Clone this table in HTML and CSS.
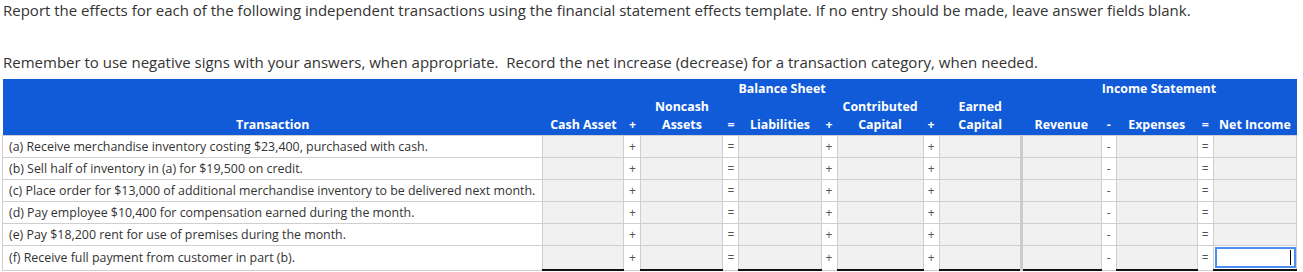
FILE: index.html
```html
<!DOCTYPE html>
<html lang="en">
<head>
<meta charset="utf-8">
<title>Financial statement effects template</title>
<link rel="stylesheet" href="styles.css">
</head>
<body>
<p class="intro">Report the effects for each of the following independent transactions using the financial statement effects template. If no entry should be made, leave answer fields blank.</p>
<p class="intro second">Remember to use negative signs with your answers, when appropriate.&nbsp; Record the net increase (decrease) for a transaction category, when needed.</p>
<table class="fse">
  <colgroup>
    <col class="c-txn">
    <col class="c-in81">
    <col class="c-op17">
    <col class="c-in82">
    <col class="c-op16">
    <col class="c-in82">
    <col class="c-op16">
    <col class="c-in86">
    <col class="c-op16">
    <col class="c-in82">
    <col class="c-in80">
    <col class="c-op15">
    <col class="c-in81">
    <col class="c-op16">
    <col class="c-in83">
  </colgroup>
  <thead>
    <tr class="group">
      <th rowspan="2" class="txn-h">Transaction</th>
      <th colspan="9">Balance Sheet</th>
      <th colspan="5">Income Statement</th>
    </tr>
    <tr class="labels">
      <th>Cash Asset</th><th class="op">+</th>
      <th>Noncash<br>Assets</th><th class="op">=</th>
      <th>Liabilities</th><th class="op">+</th>
      <th>Contributed<br>Capital</th><th class="op">+</th>
      <th>Earned<br>Capital</th>
      <th>Revenue</th><th class="op">-</th>
      <th>Expenses</th><th class="op">=</th>
      <th>Net Income</th>
    </tr>
  </thead>
  <tbody>
    <tr>
      <td class="txn">(a) Receive merchandise inventory costing $23,400, purchased with cash.</td>
      <td class="in"></td><td class="op">+</td><td class="in"></td><td class="op">=</td><td class="in"></td><td class="op">+</td><td class="in"></td><td class="op">+</td><td class="in sep"></td>
      <td class="in"></td><td class="op">-</td><td class="in"></td><td class="op">=</td><td class="in"></td>
    </tr>
    <tr>
      <td class="txn">(b) Sell half of inventory in (a) for $19,500 on credit.</td>
      <td class="in"></td><td class="op">+</td><td class="in"></td><td class="op">=</td><td class="in"></td><td class="op">+</td><td class="in"></td><td class="op">+</td><td class="in sep"></td>
      <td class="in"></td><td class="op">-</td><td class="in"></td><td class="op">=</td><td class="in"></td>
    </tr>
    <tr>
      <td class="txn">(c) Place order for $13,000 of additional merchandise inventory to be delivered next month.</td>
      <td class="in"></td><td class="op">+</td><td class="in"></td><td class="op">=</td><td class="in"></td><td class="op">+</td><td class="in"></td><td class="op">+</td><td class="in sep"></td>
      <td class="in"></td><td class="op">-</td><td class="in"></td><td class="op">=</td><td class="in"></td>
    </tr>
    <tr>
      <td class="txn">(d) Pay employee $10,400 for compensation earned during the month.</td>
      <td class="in"></td><td class="op">+</td><td class="in"></td><td class="op">=</td><td class="in"></td><td class="op">+</td><td class="in"></td><td class="op">+</td><td class="in sep"></td>
      <td class="in"></td><td class="op">-</td><td class="in"></td><td class="op">=</td><td class="in"></td>
    </tr>
    <tr>
      <td class="txn">(e) Pay $18,200 rent for use of premises during the month.</td>
      <td class="in"></td><td class="op">+</td><td class="in"></td><td class="op">=</td><td class="in"></td><td class="op">+</td><td class="in"></td><td class="op">+</td><td class="in sep"></td>
      <td class="in"></td><td class="op">-</td><td class="in"></td><td class="op">=</td><td class="in"></td>
    </tr>
    <tr class="last">
      <td class="txn">(f) Receive full payment from customer in part (b).</td>
      <td class="in"></td><td class="op">+</td><td class="in"></td><td class="op">=</td><td class="in"></td><td class="op">+</td><td class="in"></td><td class="op">+</td><td class="in sep"></td>
      <td class="in"></td><td class="op">-</td><td class="in"></td><td class="op">=</td><td class="in focus"><div class="field"><span class="caret"></span></div></td>
    </tr>
  </tbody>
</table>
</body>
</html>
```
FILE: styles.css
```css
html, body {
  margin: 0;
  padding: 0;
  background: #ffffff;
}
body {
  font-family: "Open Sans", "Liberation Sans", sans-serif;
  color: #333333;
  padding: 0 2px;
}
.intro {
  margin: 0;
  font-size: 15px;
  line-height: 20px;
  padding-left: 1px;
}
.intro.second {
  margin-top: 32px;
  margin-bottom: 7px;
}
.fse {
  border-collapse: collapse;
  table-layout: fixed;
  width: 1295px;
  font-size: 12.4px;
}
.c-txn { width: 540px; }
.c-in81 { width: 81px; }
.c-in82 { width: 82px; }
.c-in80 { width: 80px; }
.c-in83 { width: 83px; }
.c-in86 { width: 86px; }
.c-op17 { width: 17px; }
.c-op16 { width: 16px; }
.c-op15 { width: 15px; }

.fse thead th {
  background: #115bd9;
  color: #ffffff;
  font-weight: 700;
  font-size: 12.4px;
  line-height: 18px;
  text-align: center;
  padding: 0;
  white-space: nowrap;
}
.fse thead tr.group th {
  height: 19px;
  vertical-align: middle;
}
.fse thead tr.group th.txn-h {
  vertical-align: bottom;
  padding-bottom: 1px;
}
.fse thead tr.labels th {
  vertical-align: bottom;
  padding-bottom: 1px;
  height: 36px;
}
.fse td {
  height: 21px;
  padding: 0;
  border: 1px solid #cfcfcf;
  line-height: 20px;
}
.fse td.txn {
  padding-left: 6px;
  color: #333333;
  white-space: nowrap;
  overflow: hidden;
  padding-top: 1px;
  line-height: 20px;
  height: 20px;
}
.fse td.in {
  background: #f1f1f1;
}
.fse td.sep {
  border-right: 3px solid #cccccc;
}
.fse td.op {
  background: #ffffff;
  color: #555555;
  text-align: center;
  font-size: 12px;
}
.fse tr.last td.in {
  border-bottom: 2px solid #111111;
}
.fse td.focus {
  background: #ffffff;
  padding: 0;
}
.field {
  position: relative;
  height: 17px;
  margin: 1px 0 1px 1px;
  border: 2px solid #4a8ff0;
  background: #ffffff;
}
.caret {
  position: absolute;
  right: 3px;
  top: 1px;
  width: 1px;
  height: 15px;
  background: #000000;
}
```
